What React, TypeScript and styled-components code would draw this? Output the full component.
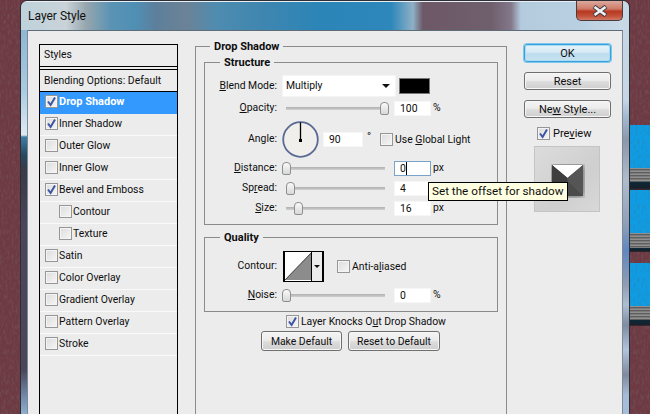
import React from "react";
import styled, { createGlobalStyle } from "styled-components";

const GlobalStyle = createGlobalStyle`
  html, body {
    margin: 0;
    padding: 0;
    overflow: hidden;
    background: #69363f;
  }
  * {
    box-sizing: border-box;
  }
`;

const Page = styled.div`
  width: 650px;
  height: 414px;
  display: flex;
  overflow: hidden;
  background: #69363f;
  color: #0e0e0e;
  font-family: Roboto, "Liberation Sans", sans-serif;
  font-size: 10.4px;
  line-height: 13px;
`;

const Desk = styled.div<{ $w: number }>`
  position: relative;
  flex: none;
  width: ${(p) => p.$w}px;
  height: 414px;
  background: #6d3a43;
`;

const LeatherSvg = styled.svg`
  position: absolute;
  inset: 0;
  width: 100%;
  height: 100%;
`;

const StripStack = styled.div`
  position: relative;
  display: flex;
  flex-direction: column;
  padding-top: 125px;
`;

const Strip = styled.div<{ $gap: number }>`
  display: flex;
  flex-direction: column;
  margin-bottom: ${(p) => p.$gap}px;
`;

const StripBlue = styled.div`
  position: relative;
  height: 43px;
  background: #0f9ce2;
  overflow: hidden;
`;

const StripPages = styled.div<{ $h: number }>`
  height: ${(p) => p.$h}px;
  background: repeating-linear-gradient(180deg, #8f8f8f 0 1px, #5e5e5e 1px 2px, #7b7b7b 2px 3px);
`;

const StripShadow = styled.div<{ $h: number }>`
  height: ${(p) => p.$h}px;
  background: linear-gradient(180deg, #0d2a38, #14202a 70%, #3f2a33);
`;

const Frame = styled.div`
  flex: none;
  width: 610px;
  height: 430px;
  display: flex;
  flex-direction: column;
  border: 1px solid #2e2f36;
  border-radius: 7px 7px 0 0;
  overflow: hidden;
`;

const TitleBar = styled.div`
  flex: none;
  height: 29px;
  display: flex;
  align-items: flex-start;
  justify-content: space-between;
  padding-left: 7px;
  border-top: 1px solid #e8f0f4;
  background: linear-gradient(
    90deg,
    #bfd2dc 0,
    #c9d3d8 45px,
    #97a6ae 65px,
    #5a93b4 90px,
    #4f8fb4 115px,
    #5d7f9b 135px,
    #6c8296 165px,
    #4f8cb0 195px,
    #3f86b0 240px,
    #2b85b7 300px,
    #2d87ba 370px,
    #8fb0c6 392px,
    #6d5866 402px,
    #6f5f6c 470px,
    #83778a 490px,
    #b4cbde 500px,
    #b9d0e2 560px,
    #c8d9e6 600px
  );
`;

const TitleText = styled.div`
  margin-top: 6px;
  font-size: 12px;
  line-height: 16px;
  color: #101010;
`;

const CloseButton = styled.div`
  flex: none;
  width: 47px;
  height: 20px;
  margin: -1px 6px 0 0;
  display: flex;
  align-items: center;
  justify-content: center;
  border: 1px solid #4d3b3b;
  border-top: 0;
  border-radius: 0 0 5px 5px;
  background: linear-gradient(180deg, #dca99d 0, #cf7d6b 40%, #b8391f 55%, #c4523a 80%, #cf7a68 100%);
`;

const BodyRow = styled.div`
  flex: 1;
  display: flex;
  min-height: 0;
`;

const GlassEdge = styled.div<{ $side: "left" | "right" }>`
  flex: none;
  width: 6px;
  background: ${(p) =>
    p.$side === "left"
      ? "linear-gradient(180deg, #8fb6d2 0, #a9cbe2 60px, #dfeaf2 105px, #3f7ea4 107px, #27495f 125px, #3a3a48 140px, #4c465a 200px, #4c465a 340px, #6f86a8 365px, #8fb2d0 385px)"
      : "linear-gradient(180deg, #c5d6e4 0, #c6d6e4 70px, #a5bdd6 85px, #8b97aa 110px, #b0bccc 150px, #8d9fb8 195px, #5f87c2 220px, #8e9db4 255px, #aebed2 275px, #7f8ca2 295px, #b0c4dc 320px, #7f8a9e 345px, #a7bcd8 365px)"};
`;

const Content = styled.div`
  position: relative;
  flex: 1;
  display: flex;
  align-items: flex-start;
  padding: 9px 0 0 11px;
  background: #ececec;
  border-top: 1px solid #5f6d79;
  border-left: 1px solid #7d8a96;
  border-right: 1px solid #7d8a96;
`;

const StyleList = styled.div`
  flex: none;
  width: 139px;
  height: 400px;
  margin-top: 4px;
  border: 1px solid #000;
`;

const StylesHeader = styled.div`
  height: 22px;
  padding: 3px 0 0 4px;
  border-bottom: 1px solid #000;
`;

const BlendingRow = styled.div`
  height: 23px;
  margin-top: 2px;
  padding: 4px 0 0 4px;
  white-space: nowrap;
  border-top: 1px solid #000;
  border-bottom: 1px solid #000;
`;

const StyleRow = styled.div<{ $selected?: boolean; $indent?: boolean }>`
  height: 22px;
  display: flex;
  align-items: center;
  gap: 1px;
  padding: 0 0 2px ${(p) => (p.$indent ? 19 : 5)}px;
  border-bottom: 1px solid ${(p) => (p.$selected ? "#3399ff" : "#fafafa")};
  background: ${(p) => (p.$selected ? "#3399ff" : "transparent")};
  color: ${(p) => (p.$selected ? "#fff" : "inherit")};
  font-size: ${(p) => (p.$selected ? 11 : 10.4)}px;
  font-weight: ${(p) => (p.$selected ? 700 : 400)};
`;

const Box = styled.span`
  flex: none;
  width: 13px;
  height: 13px;
  display: inline-flex;
  align-items: center;
  justify-content: center;
  border: 1px solid #969696;
  background: linear-gradient(135deg, #dcdcdc, #f6f6f6);
  box-shadow: inset 0 0 0 1px #f4f4f4;
`;

const MiddleColumn = styled.div`
  flex: none;
  width: 312px;
  margin-left: 17px;
`;

const Group = styled.fieldset<{ $outer?: boolean; $top?: number }>`
  margin: ${(p) => p.$top ?? 0}px 0 0 0;
  min-width: 0;
  height: ${(p) => (p.$outer ? "420px" : "auto")};
  padding: ${(p) => (p.$outer ? "3px 8px 0" : "7px 0 8px")};
  border: 1px solid #8b8b8b;
`;

const GroupTitle = styled.legend`
  margin-left: 15px;
  padding: 0 4px;
  font-size: 11px;
  font-weight: 700;
  line-height: 13px;
`;

const OuterTitle = styled(GroupTitle)`
  margin-left: 6px;
`;

const FormStack = styled.div`
  display: flex;
  flex-direction: column;
  gap: 5px;
`;

const FormRow = styled.div<{ $h: number; $after?: number }>`
  height: ${(p) => p.$h}px;
  margin-bottom: ${(p) => p.$after ?? 0}px;
  display: flex;
  align-items: center;
`;

const FieldLabel = styled.div`
  flex: none;
  width: 72px;
  margin-top: -2px;
  text-align: right;
`;

const SelectBox = styled.div`
  flex: none;
  width: 112px;
  height: 20px;
  margin-left: 6px;
  display: flex;
  align-items: center;
  justify-content: space-between;
  padding: 0 5px 1px 3px;
  background: #fff;
  box-shadow: 0 0 0 1px #f4f4f4;
`;

const DownArrow = styled.span`
  width: 0;
  height: 0;
  border-left: 4px solid transparent;
  border-right: 4px solid transparent;
  border-top: 4px solid #111;
`;

const Swatch = styled.div`
  flex: none;
  width: 31px;
  height: 16px;
  margin-left: 4px;
  background: #000;
  border: 1px solid #777;
`;

const Slider = styled.div`
  position: relative;
  flex: none;
  width: 99px;
  height: 3px;
  margin-left: 9px;
  background: linear-gradient(180deg, #b0b0b0, #d0d0d0);
`;

const Thumb = styled.div<{ $at: number }>`
  position: absolute;
  left: ${(p) => p.$at - 4}px;
  top: -5px;
  width: 9px;
  height: 13px;
  border: 1px solid #8f8f8f;
  border-radius: 4px 4px 2px 2px;
  background: linear-gradient(180deg, #fafafa, #d8d8d8);
`;

const NumberField = styled.div<{ $focused?: boolean; $w?: number; $left?: number }>`
  flex: none;
  width: ${(p) => p.$w ?? 37}px;
  height: 15px;
  margin-left: ${(p) => p.$left ?? 9}px;
  padding-left: 5px;
  display: flex;
  align-items: center;
  background: #fff;
  border: 1px solid ${(p) => (p.$focused ? "#7ba2c8" : "#f6f6f6")};
`;

const Caret = styled.span`
  width: 1px;
  height: 13px;
  background: #000;
`;

const Unit = styled.div`
  margin: -2px 0 0 2px;
`;

const DialWrap = styled.div`
  flex: none;
  width: 37px;
  height: 37px;
  margin-left: 5px;
`;

const GlobalLight = styled.div`
  display: flex;
  align-items: center;
  gap: 2px;
  margin-left: 9px;
`;

const Degree = styled.div`
  margin: -6px 0 0 4px;
  font-size: 11px;
`;

const ContourPicker = styled.div`
  flex: none;
  width: 41px;
  height: 31px;
  margin-left: 6px;
  display: flex;
  border: 2px solid #000;
  border-bottom-width: 1px;
  border-top-width: 1px;
  background: #fff;
`;

const ContourArrow = styled.div`
  flex: none;
  width: 11px;
  display: flex;
  align-items: center;
  justify-content: center;
  border-left: 1px solid #000;
  background: #ececec;
`;

const SmallArrow = styled(DownArrow)`
  border-left-width: 3px;
  border-right-width: 3px;
  border-top-width: 3px;
`;

const CheckRow = styled.div<{ $left: number; $top?: number }>`
  display: flex;
  align-items: center;
  gap: 2px;
  margin: ${(p) => p.$top ?? 0}px 0 0 ${(p) => p.$left}px;
`;

const ButtonRow = styled.div`
  display: flex;
  gap: 6px;
  margin: 3px 0 0 57px;
`;

const Button = styled.div<{ $w?: number; $h?: number; $primary?: boolean }>`
  flex: none;
  width: ${(p) => (p.$w ? `${p.$w}px` : "100%")};
  height: ${(p) => p.$h ?? 18}px;
  display: flex;
  align-items: center;
  justify-content: center;
  border: 1px solid ${(p) => (p.$primary ? "#38a0dc" : "#6f6f6f")};
  border-radius: 3px;
  background: ${(p) =>
    p.$primary
      ? "linear-gradient(180deg, #e6f3fa 0, #d6e9f4 45%, #bcdcee 55%, #c8e2f0 100%)"
      : "linear-gradient(180deg, #f4f4f4 0, #ececec 45%, #dcdcdc 55%, #cfcfcf 100%)"};
  box-shadow: ${(p) => (p.$primary ? "0 0 0 1px #7cc7ec, inset 0 0 0 1px #a9dcf4" : "inset 0 0 0 1px #f6f6f6")};
`;

const SideButton = styled(Button)`
  font-size: 11px;
`;

const RightColumn = styled.div`
  flex: none;
  width: 87px;
  margin: 4px 0 0 17px;
  display: flex;
  flex-direction: column;
  gap: 10px;
`;

const PreviewRow = styled.div`
  display: flex;
  align-items: center;
  gap: 3px;
  margin: -1px 0 0 13px;
  font-size: 11px;
`;

const PreviewTile = styled.div`
  width: 66px;
  height: 66px;
  margin: -4px 0 0 10px;
  padding: 17px 0 0 16px;
  border: 1px solid #c4c4c4;
  background: linear-gradient(135deg, #dcdcdc, #cfcfcf 60%, #d8d8d8);
`;

const Tooltip = styled.div`
  position: absolute;
  left: 400px;
  top: 151px;
  width: 140px;
  height: 19px;
  display: flex;
  align-items: center;
  padding-left: 3px;
  font-size: 11.7px;
  white-space: nowrap;
  background: #ffffe1;
  border: 1px solid #000;
`;

const Check = () => (
  <svg width="11" height="11" viewBox="0 0 11 11">
    <path d="M2 5.5 L4.6 9 L9 1.5" fill="none" stroke="#3e55a6" strokeWidth="2" />
  </svg>
);

const CheckBox = ({ on }: { on?: boolean }) => <Box>{on ? <Check /> : null}</Box>;

const Leather = ({ id, tone, amount }: { id: string; tone: number; amount: number }) => (
  <LeatherSvg>
    <filter id={id}>
      <feTurbulence type="fractalNoise" baseFrequency="0.5 0.2" numOctaves="3" seed="4" />
      <feColorMatrix values={`0 0 0 0 ${tone} 0 0 0 0 ${tone} 0 0 0 0 ${tone} ${amount} 0 0 0 ${-amount * 0.45}`} />
    </filter>
    <rect width="100%" height="100%" filter={`url(#${id})`} />
  </LeatherSvg>
);

const FxSlider = ({ at }: { at: number }) => (
  <Slider>
    <Thumb $at={at} />
  </Slider>
);

const styleRows = [
  { name: "Drop Shadow", on: true, selected: true },
  { name: "Inner Shadow", on: true },
  { name: "Outer Glow" },
  { name: "Inner Glow" },
  { name: "Bevel and Emboss", on: true },
  { name: "Contour", indent: true },
  { name: "Texture", indent: true },
  { name: "Satin" },
  { name: "Color Overlay" },
  { name: "Gradient Overlay" },
  { name: "Pattern Overlay" },
  { name: "Stroke" },
];

export default function App() {
  return (
    <Page>
      <GlobalStyle />
      <Desk $w={20}>
        <Leather id="leatherLeft" tone={0.22} amount={0.6} />
      </Desk>
      <Frame>
        <TitleBar>
          <TitleText>Layer Style</TitleText>
          <CloseButton>
            <svg width="16" height="12" viewBox="0 0 16 12">
              <path d="M2 1.5 L14 10.5 M14 1.5 L2 10.5" stroke="#3d3d4a" strokeWidth="4.4" fill="none" />
              <path d="M2.5 2 L13.5 10 M13.5 2 L2.5 10" stroke="#f2f2f2" strokeWidth="2.6" fill="none" />
            </svg>
          </CloseButton>
        </TitleBar>
        <BodyRow>
          <GlassEdge $side="left" />
          <Content>
            <StyleList>
              <StylesHeader>Styles</StylesHeader>
              <BlendingRow>Blending Options: Default</BlendingRow>
              {styleRows.map((row) => (
                <StyleRow key={row.name} $selected={row.selected} $indent={row.indent}>
                  <CheckBox on={row.on} />
                  {row.name}
                </StyleRow>
              ))}
            </StyleList>

            <MiddleColumn>
              <Group $outer>
                <OuterTitle>Drop Shadow</OuterTitle>
                <Group>
                  <GroupTitle>Structure</GroupTitle>
                  <FormStack>
                    <FormRow $h={20}>
                      <FieldLabel>
                        <u>B</u>lend Mode:
                      </FieldLabel>
                      <SelectBox>
                        Multiply
                        <DownArrow />
                      </SelectBox>
                      <Swatch />
                    </FormRow>
                    <FormRow $h={15}>
                      <FieldLabel>
                        <u>O</u>pacity:
                      </FieldLabel>
                      <FxSlider at={98} />
                      <NumberField>100</NumberField>
                      <Unit>%</Unit>
                    </FormRow>
                    <FormRow $h={36} $after={-1}>
                      <FieldLabel>Angle:</FieldLabel>
                      <DialWrap>
                        <svg width="37" height="37" viewBox="0 0 37 37">
                          <circle cx="18.5" cy="18.5" r="17.3" fill="#f1efeb" stroke="#5a6a94" strokeWidth="1.8" />
                          <path d="M18.5 1.5 V19" stroke="#000" strokeWidth="1.3" />
                          <rect x="17" y="18" width="3" height="3" fill="#000" />
                        </svg>
                      </DialWrap>
                      <NumberField $w={40} $left={4}>
                        90
                      </NumberField>
                      <Degree>°</Degree>
                      <GlobalLight>
                        <CheckBox />
                        <span>
                          Use <u>G</u>lobal Light
                        </span>
                      </GlobalLight>
                    </FormRow>
                    <FormRow $h={15}>
                      <FieldLabel>
                        <u>D</u>istance:
                      </FieldLabel>
                      <FxSlider at={0} />
                      <NumberField $focused>
                        0
                        <Caret />
                      </NumberField>
                      <Unit>px</Unit>
                    </FormRow>
                    <FormRow $h={15}>
                      <FieldLabel>
                        Sp<u>r</u>ead:
                      </FieldLabel>
                      <FxSlider at={4} />
                      <NumberField>4</NumberField>
                      <Unit>px</Unit>
                    </FormRow>
                    <FormRow $h={15}>
                      <FieldLabel>
                        <u>S</u>ize:
                      </FieldLabel>
                      <FxSlider at={12} />
                      <NumberField>16</NumberField>
                      <Unit>px</Unit>
                    </FormRow>
                  </FormStack>
                </Group>

                <Group $top={6}>
                  <GroupTitle>Quality</GroupTitle>
                  <FormStack>
                    <FormRow $h={31} $after={1}>
                      <FieldLabel>Contour:</FieldLabel>
                      <ContourPicker>
                        <svg width="28" height="29" viewBox="0 0 28 29">
                          <path d="M0 29 L28 0 V29 Z" fill="#8c8c8c" />
                          <path d="M0 29 L28 0" stroke="#111" strokeWidth="0.8" />
                        </svg>
                        <ContourArrow>
                          <SmallArrow />
                        </ContourArrow>
                      </ContourPicker>
                      <CheckRow $left={13}>
                        <CheckBox />
                        <span>
                          Anti-a<u>l</u>iased
                        </span>
                      </CheckRow>
                    </FormRow>
                    <FormRow $h={15}>
                      <FieldLabel>
                        <u>N</u>oise:
                      </FieldLabel>
                      <FxSlider at={0} />
                      <NumberField>0</NumberField>
                      <Unit>%</Unit>
                    </FormRow>
                  </FormStack>
                </Group>

                <CheckRow $left={82} $top={3}>
                  <CheckBox on />
                  <span>
                    Layer Knocks O<u>u</u>t Drop Shadow
                  </span>
                </CheckRow>
                <ButtonRow>
                  <Button $w={81} $h={20}>
                    Make Default
                  </Button>
                  <Button $w={92} $h={20}>
                    Reset to Default
                  </Button>
                </ButtonRow>
              </Group>
            </MiddleColumn>

            <RightColumn>
              <SideButton $primary>OK</SideButton>
              <SideButton>Reset</SideButton>
              <SideButton>
                <span>
                  Ne<u>w</u> Style...
                </span>
              </SideButton>
              <PreviewRow>
                <CheckBox on />
                <span>
                  Pre<u>v</u>iew
                </span>
              </PreviewRow>
              <PreviewTile>
                <svg width="34" height="34" viewBox="0 0 34 34">
                  <filter id="tileBlur" x="-30%" y="-30%" width="160%" height="160%">
                    <feGaussianBlur stdDeviation="3" />
                  </filter>
                  <rect x="1" y="1" width="31" height="31" fill="#222" opacity="0.75" filter="url(#tileBlur)" />
                  <rect x="1" y="1" width="31" height="31" fill="#4b4b4b" />
                  <path d="M1 1 H32 L16.5 14 Z" fill="#fff" />
                  <path d="M1 1 L16.5 14 V17 L1 32 Z" fill="#3e3e3e" />
                  <path d="M32 1 L16.5 14 V17 L32 32 Z" fill="#555" />
                </svg>
              </PreviewTile>
            </RightColumn>

            <Tooltip>Set the offset for shadow</Tooltip>
          </Content>
          <GlassEdge $side="right" />
        </BodyRow>
      </Frame>
      <Desk $w={20}>
        <Leather id="leatherRight" tone={0.22} amount={0.6} />
        <StripStack>
          <Strip $gap={0}>
            <StripBlue>
              <Leather id="blueA" tone={0.1} amount={0.5} />
            </StripBlue>
            <StripPages $h={14} />
            <StripShadow $h={8} />
          </Strip>
          <Strip $gap={11}>
            <StripBlue>
              <Leather id="blueB" tone={0.1} amount={0.5} />
            </StripBlue>
            <StripPages $h={15} />
            <StripShadow $h={4} />
          </Strip>
          <Strip $gap={0}>
            <StripBlue>
              <Leather id="blueC" tone={0.1} amount={0.5} />
            </StripBlue>
            <StripPages $h={14} />
            <StripShadow $h={6} />
          </Strip>
        </StripStack>
      </Desk>
    </Page>
  );
}
